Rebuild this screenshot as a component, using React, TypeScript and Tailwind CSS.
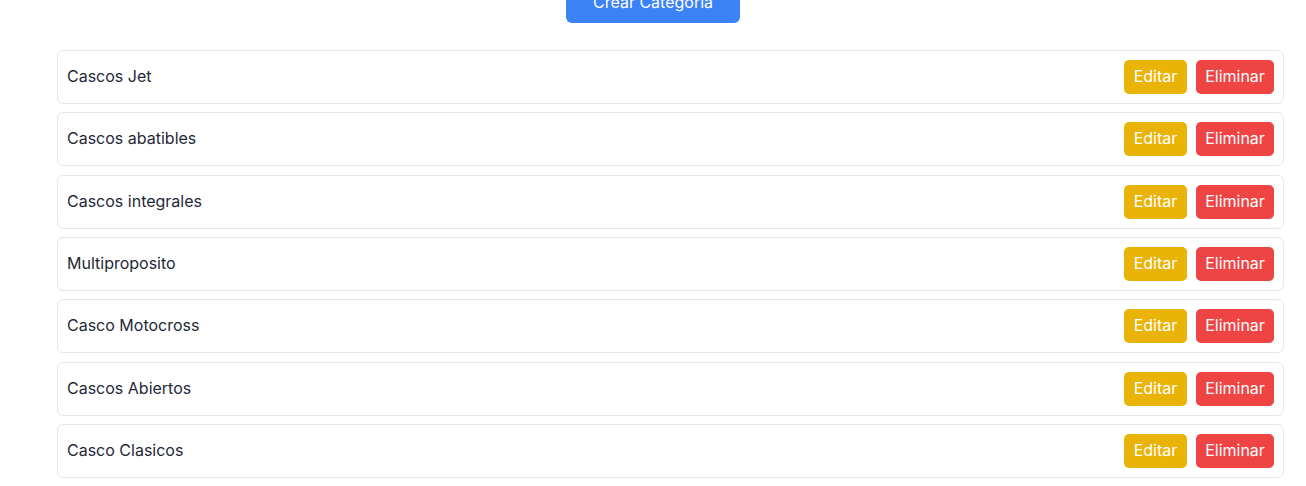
const categorias = [
  'Cascos Jet',
  'Cascos abatibles',
  'Cascos integrales',
  'Multiproposito',
  'Casco Motocross',
  'Cascos Abiertos',
  'Casco Clasicos',
]

export default function App() {
  return (
    <div className="min-h-screen bg-white font-['Inter',sans-serif] text-[16px] overflow-hidden">
      <div className="flex justify-center">
        <button className="-mt-[17px] h-[40px] w-[174px] rounded-md bg-[#3b82f6] text-white pb-[2px]">
          Crear Categoria
        </button>
      </div>

      <div className="mt-[27px] pl-[57px] pr-[22px] flex flex-col gap-[8.33px]">
        {categorias.map((nombre) => (
          <div
            key={nombre}
            className="flex items-center justify-between border border-[#e5e7eb] rounded-md py-[9px] pl-[9px] pr-[9px]"
          >
            <span className="text-[#1f2937] pb-[2px]">{nombre}</span>
            <div className="flex gap-[9px]">
              <button className="h-[34px] w-[63px] rounded-[5px] bg-[#eab308] text-white pb-[2px]">
                Editar
              </button>
              <button className="h-[34px] w-[78px] rounded-[5px] bg-[#ef4444] text-white pb-[2px]">
                Eliminar
              </button>
            </div>
          </div>
        ))}
      </div>
    </div>
  )
}
